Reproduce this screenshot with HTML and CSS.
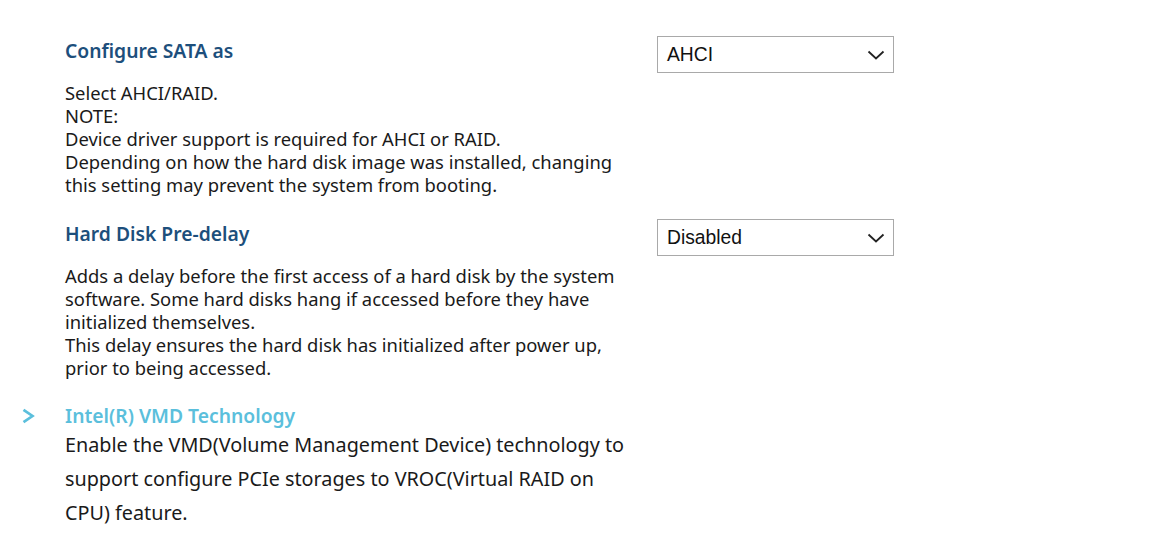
FILE: index.html
```html
<!DOCTYPE html>
<html>
<head>
<meta charset="utf-8">
<link rel="stylesheet" href="styles.css">
</head>
<body>
<div class="page">
  <div class="setting">
    <div class="info">
      <h2 class="title">Configure SATA as</h2>
      <p class="desc">Select AHCI/RAID.<br>NOTE:<br>Device driver support is required for AHCI or RAID.<br>Depending on how the hard disk image was installed, changing this setting may prevent the system from booting.</p>
    </div>
    <div class="select">
      <span>AHCI</span>
      <svg class="chev" width="18" height="10" viewBox="0 0 18 10"><path d="M1.5 1.5 L9 8.5 L16.5 1.5" fill="none" stroke="#222" stroke-width="1.8"/></svg>
    </div>
  </div>
  <div class="setting second">
    <div class="info">
      <h2 class="title">Hard Disk Pre-delay</h2>
      <p class="desc">Adds a delay before the first access of a hard disk by the system software. Some hard disks hang if accessed before they have initialized themselves.<br>This delay ensures the hard disk has initialized after power up, prior to being accessed.</p>
    </div>
    <div class="select">
      <span>Disabled</span>
      <svg class="chev" width="18" height="10" viewBox="0 0 18 10"><path d="M1.5 1.5 L9 8.5 L16.5 1.5" fill="none" stroke="#222" stroke-width="1.8"/></svg>
    </div>
  </div>
  <div class="link-item">
    <svg class="arrow" width="15" height="16" viewBox="0 0 15 16"><path d="M2.5 1.8 L11.5 8 L2.5 14.2" fill="none" stroke="#5bbfdc" stroke-width="2.7"/></svg>
    <div class="link-body">
      <h2 class="link-title">Intel(R) VMD Technology</h2>
      <p class="link-desc">Enable the VMD(Volume Management Device) technology to support configure PCIe storages to VROC(Virtual RAID on CPU) feature.</p>
    </div>
  </div>
</div>
</body>
</html>
```
FILE: styles.css
```css
html, body {
  margin: 0;
  padding: 0;
  background: #ffffff;
}
body {
  font-family: "Noto Sans", "Open Sans", sans-serif;
  color: #1a1a1a;
}
.page {
  padding: 39px 0 0 65px;
}
.setting {
  display: flex;
  align-items: flex-start;
}
.setting.second {
  margin-top: 26px;
}
.info {
  width: 592px;
}
.title {
  margin: 0;
  font-size: 19.3px;
  font-weight: 600;
  color: #1d4f7c;
  line-height: 24px;
}
.desc {
  margin: 18px 0 0 0;
  width: 565px;
  font-size: 18.4px;
  line-height: 23px;
}
.select {
  margin-top: -3px;
  border: 1px solid #a9a9a9;
  display: flex;
  align-items: center;
  justify-content: space-between;
  padding: 0 8px 0 9px;
  box-sizing: border-box;
  width: 237px;
  height: 37px;
  font-family: "Liberation Sans", Arial, sans-serif;
  font-size: 19.3px;
  color: #111;
}
.link-item {
  display: flex;
  margin-left: -43px;
  margin-top: 25px;
}
.arrow {
  margin-top: 4px;
  margin-left: -1px;
  flex: none;
}
.link-body {
  margin-left: 29px;
}
.link-title {
  margin: 0;
  font-size: 19.3px;
  font-weight: 600;
  color: #5bbfdc;
  line-height: 24px;
}
.link-desc {
  margin: 0;
  width: 575px;
  font-size: 19.8px;
  line-height: 34px;
}
```
